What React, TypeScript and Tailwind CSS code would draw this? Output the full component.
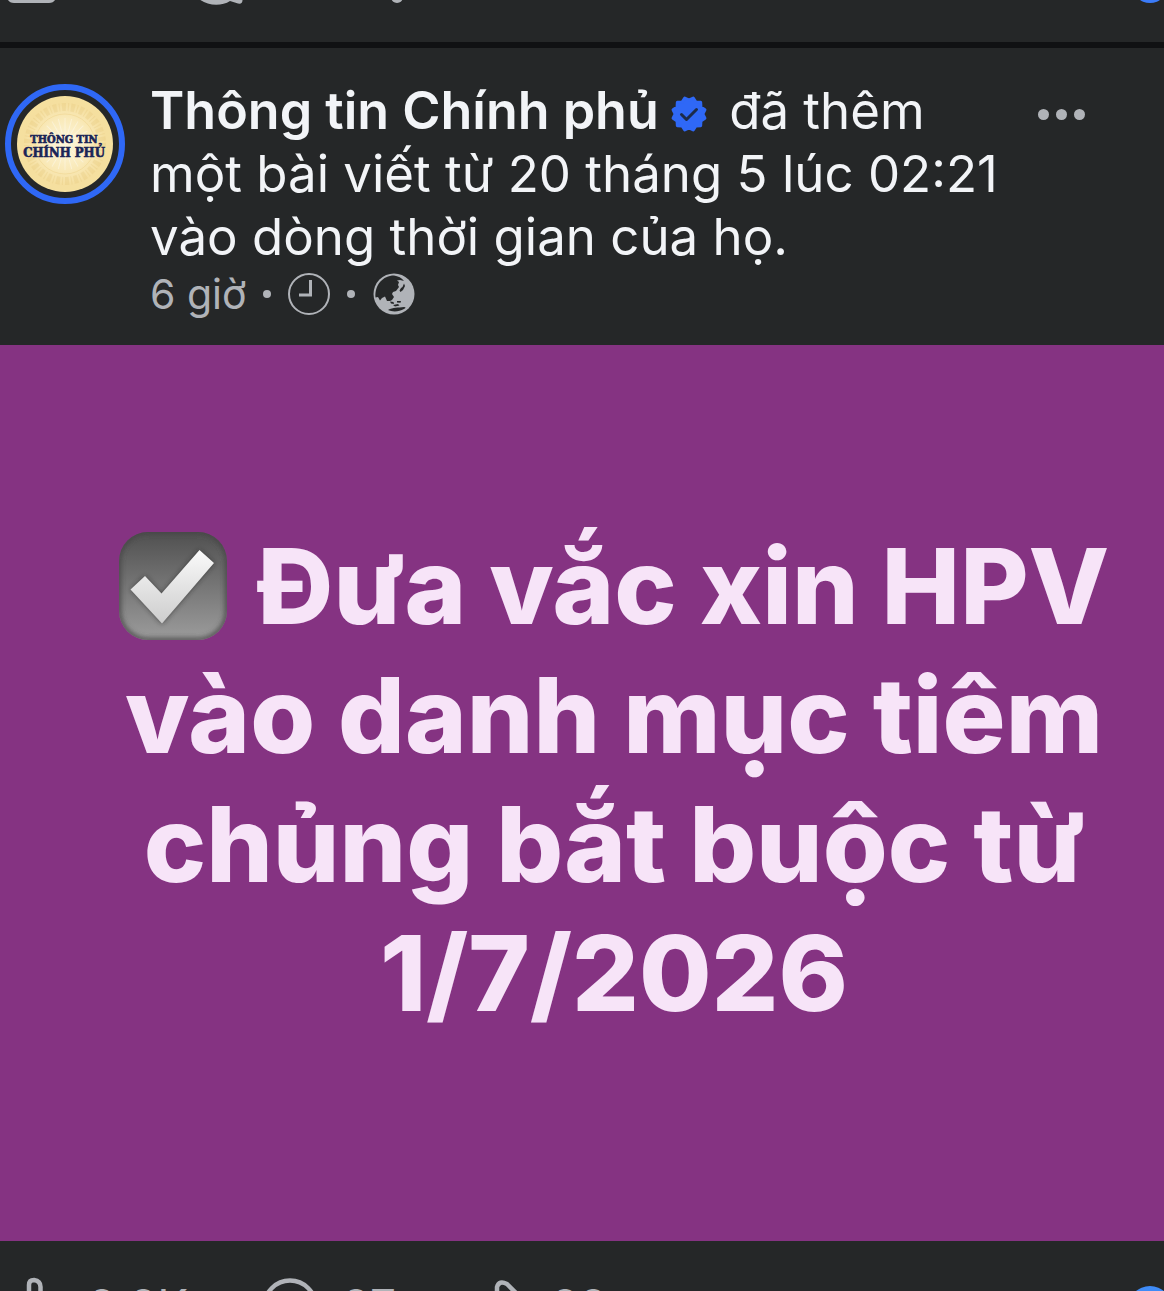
import React from "react";

const badgePoints = Array.from({ length: 24 }, (_, i) => {
  const a = ((i * 15 - 75) * Math.PI) / 180;
  const r = i % 2 === 0 ? 16.5 : 13.8;
  return `${(18 + r * Math.cos(a)).toFixed(2)},${(18 + r * Math.sin(a)).toFixed(2)}`;
}).join(" ");

function Avatar() {
  const rays = Array.from({ length: 24 }, (_, i) => i * 15);
  return (
    <svg viewBox="0 0 120 120" className="size-[120px] shrink-0" role="img" aria-label="Thông tin Chính phủ">
      <defs>
        <radialGradient id="gold">
          <stop offset="0" stopColor="#fdf6dc" />
          <stop offset="0.55" stopColor="#f9e9b8" />
          <stop offset="0.85" stopColor="#f5df9f" />
          <stop offset="1" stopColor="#f5e09f" />
        </radialGradient>
      </defs>
      <circle cx="60" cy="60" r="57" fill="none" stroke="#2f68f6" strokeWidth="6" />
      <circle cx="60" cy="60" r="48" fill="url(#gold)" />
      <circle cx="60" cy="60" r="37" fill="none" stroke="#e6c67a" strokeOpacity="0.3" strokeWidth="8" strokeDasharray="4 2 1 2" />
      <circle cx="60" cy="60" r="30" fill="none" stroke="#e9c878" strokeOpacity="0.35" strokeWidth="1" />
      {rays.map((r) => (
        <path key={r} d="M60 50V34" stroke="#fff" strokeOpacity="0.35" strokeWidth="1" transform={`rotate(${r} 60 60)`} />
      ))}
      <g fill="#1b2557" stroke="#1b2557" strokeWidth="0.6" fontFamily="'DejaVu Serif Condensed', 'DejaVu Serif', serif" fontWeight="700" textAnchor="middle">
        <text x="59" y="59" fontSize="11">THÔNG TIN</text>
        <text x="59" y="73" fontSize="13">CHÍNH PHỦ</text>
      </g>
    </svg>
  );
}

function Verified() {
  return (
    <svg viewBox="0 0 36 36" className="mr-2 ml-3 inline-block size-9 align-[-3px]" role="img" aria-label="Đã xác minh">
      <polygon points={badgePoints} fill="#2f68f6" stroke="#2f68f6" strokeWidth="3" strokeLinejoin="round" />
      <path d="M10.500 18.500L15.500 23.500L25.500 13.500" fill="none" stroke="#1c2b4a" strokeWidth="3" strokeLinecap="round" strokeLinejoin="round" />
    </svg>
  );
}

function Clock() {
  return (
    <svg viewBox="0 0 42 42" className="size-[42px]" fill="none" stroke="#b0b3b8" aria-hidden="true">
      <circle cx="21" cy="21" r="20" strokeWidth="2" />
      <path d="M22.500 7V22H11" strokeWidth="3" />
    </svg>
  );
}

function Globe() {
  return (
    <svg viewBox="0 0 42 42" className="size-[42px]" role="img" aria-label="Công khai">
      <circle cx="21" cy="21" r="20.500" fill="#b0b3b8" />
      <g fill="#252728">
        <path d="M21 2.500C25 3 29 5 31 8L27 7L24 7.500L26 9L25 12L26 14L23 18L20 19L19 21L21 24L19 27L17 28L14 28L12 23.500L9 25L7 27.500L5 24L2.500 24.500C1.500 12 10 2.500 21 2.500Z" />
        <path d="M26.500 17.500L28 15L29.500 14L31 10.500L32 13L30 17L27.500 19Z" />
        <path d="M17 28.500L20.500 29L21 31L18 30.500ZM24 28H28L27.500 29.800L24 29.500ZM20 32L25 31L26.500 32.500L22 33.500Z" />
        <path d="M15 37C20 34 25 35 31 34C33 34 33 35 31 36C26 39 19 39 15 37Z" />
      </g>
    </svg>
  );
}

function CheckTile() {
  return (
    <svg viewBox="0 0 108 108" className="mr-2 inline-block size-[108px] align-[-16px]" role="img" aria-label="☑️">
      <defs>
        <linearGradient id="tile" x1="0" y1="0" x2="0" y2="1">
          <stop offset="0" stopColor="#505050" />
          <stop offset="1" stopColor="#9c9c9c" />
        </linearGradient>
        <linearGradient id="tick" x1="0" y1="0" x2="0" y2="1">
          <stop offset="0" stopColor="#fafafa" />
          <stop offset="1" stopColor="#cdcdcd" />
        </linearGradient>
        <filter id="soft"><feGaussianBlur stdDeviation="2.5" /></filter>
        <clipPath id="tileClip"><rect width="108" height="108" rx="29" /></clipPath>
      </defs>
      <g clipPath="url(#tileClip)">
        <rect width="108" height="108" fill="url(#tile)" />
        <rect width="108" height="108" rx="29" fill="none" stroke="#444" strokeWidth="4" filter="url(#soft)" />
      </g>
      <path d="M12 57.500L26 44L42.500 61.500L80.500 18L95 31L43 92Z" fill="#222" opacity="0.6" filter="url(#soft)" />
      <path d="M11.500 57.500L26 44L42.500 61.500L80.500 18L95 31L43 91.500Z" fill="url(#tick)" />
    </svg>
  );
}

const Dot = () => <span className="size-2 rounded-full bg-[#b0b3b8]" aria-hidden="true" />;

export default function App() {
  return (
    <main className="overflow-hidden bg-[#252728] font-['Inter','Noto_Sans',sans-serif] text-[#f2f4f7]">
      <section className="flex h-[42px] items-start justify-between overflow-hidden" aria-label="Bài viết trước">
        <svg viewBox="0 0 420 12" className="h-3 w-[420px]" fill="#b0b3b8" aria-hidden="true">
          <path d="M7 -6H56V-3Q55 3 49 3H14Q8 3 7 -3Z" />
          <path d="M197 -3C205 6 221 7 230 1L238 3.500Q243 4.500 242.500 -1V-3Z" />
          <circle cx="397" cy="-3" r="6" />
        </svg>
        <svg viewBox="0 0 40 12" className="h-3 w-10" aria-hidden="true">
          <circle cx="26" cy="-15" r="18" fill="#3b7bf8" />
        </svg>
      </section>

      <article className="border-t-6 border-[#101113]">
        <header className="flex items-start pt-[31px] pb-[27px] pl-[5px]">
          <div className="mt-[5px] mr-[25px] flex">
            <Avatar />
          </div>
          <div className="max-w-[864px] flex-1">
            <h1 className="text-[51px] leading-[63px] font-normal">
              <a href="#page" className="text-[52px] font-semibold">Thông tin Chính phủ</a>
              <Verified />
              {" "}đã thêm một bài viết từ 20 tháng 5 lúc 02:21 vào dòng thời gian của họ.
            </h1>
            <div className="mt-[2px] flex h-12 items-center text-[#b0b3b8]">
              <a href="#time" className="mr-4 text-[41px] leading-[48px]">6 giờ</a>
              <Dot />
              <span className="mx-[17px]"><Clock /></span>
              <Dot />
              <span className="ml-[18px]"><Globe /></span>
            </div>
          </div>
          <button type="button" aria-label="Tùy chọn khác" className="mt-[30px] mr-[79px] ml-auto flex gap-[7px]">
            <span className="size-[11px] rounded-full bg-[#b0b3b8]" />
            <span className="size-[11px] rounded-full bg-[#b0b3b8]" />
            <span className="size-[11px] rounded-full bg-[#b0b3b8]" />
          </button>
        </header>

        <div className="flex min-h-[896px] items-center justify-center bg-[#853382] pr-[36px] pb-7 pl-[100px]">
          <p className="text-center text-[105px] leading-[129px] font-extrabold text-[#f7e4f8]">
            <CheckTile /> Đưa vắc xin HPV vào danh mục tiêm chủng bắt buộc từ 1/7/2026
          </p>
        </div>

        <footer className="flex h-[50px] items-start justify-between overflow-hidden text-[46px] text-[#b0b3b8]">
          <div className="flex pt-[35px] leading-[60px]">
            <button type="button" aria-label="Thích" className="flex min-w-[262px]">
              <svg viewBox="0 0 88 60" className="h-[60px] w-[88px]" fill="none" stroke="#b0b3b8" strokeWidth="4.500">
                <path d="M29 20V9Q29 4 34 4Q41 5 40.500 12V22H54V46H16V24H27Z" />
              </svg>
              2,2K
            </button>
            <button type="button" aria-label="Bình luận" className="flex min-w-[209px]">
              <svg viewBox="0 0 80 60" className="h-[60px] w-20" fill="none" stroke="#b0b3b8" strokeWidth="4.500">
                <circle cx="28" cy="30" r="25.500" />
              </svg>
              27
            </button>
            <button type="button" aria-label="Chia sẻ" className="flex">
              <svg viewBox="0 0 80 60" className="h-[60px] w-20" fill="none" stroke="#b0b3b8" strokeWidth="4.500">
                <path d="M26 18V11Q28 4 36 8L58 30L34 52Q26 55 26 48V40H8V20H26Z" />
              </svg>
              28
            </button>
          </div>
          <svg viewBox="0 0 40 50" className="h-[50px] w-10" aria-hidden="true">
            <circle cx="26" cy="67" r="22" fill="#3f8bf7" />
          </svg>
        </footer>
      </article>
    </main>
  );
}
